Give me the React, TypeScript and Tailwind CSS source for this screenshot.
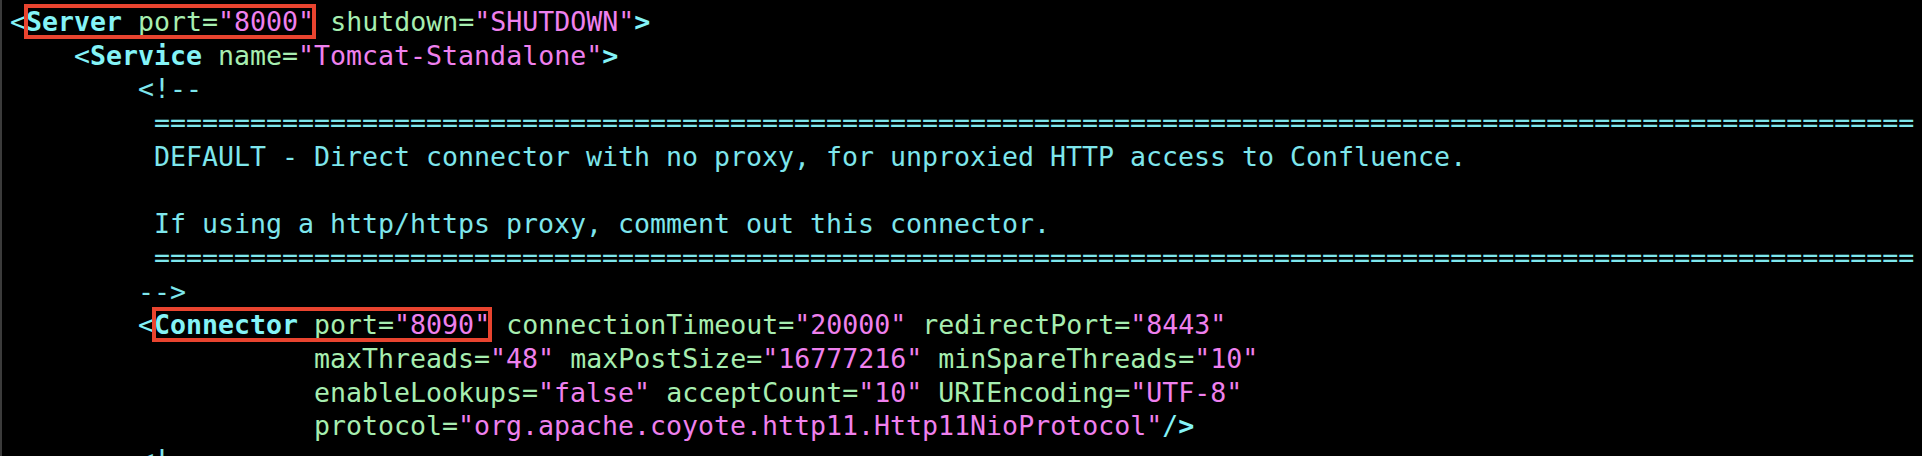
import React from "react";

const eq = "=".repeat(110);

function Tag({ children }: { children: React.ReactNode }) {
  return <span className="font-bold text-[#84f3f7]">{children}</span>;
}

function Punct({ children }: { children: React.ReactNode }) {
  return <span className="text-[#84f3f7]">{children}</span>;
}

function Attr({ name, value }: { name: string; value: string }) {
  return (
    <>
      <span className="text-[#a7eeb0]">{name}=</span>
      <span className="text-[#ef80ee]">"{value}"</span>
    </>
  );
}

function Boxed({ children }: { children: React.ReactNode }) {
  return <span className="outline-[4px] outline-solid outline-[#e9442f] outline-offset-[-2px]">{children}</span>;
}

export default function App() {
  return (
    <div className="h-[456px] w-full overflow-hidden bg-black border-l-2 border-[#3b3b3b]">
      <pre
        className="pl-2 pt-[5px] text-[26.58px] leading-[33.7px] whitespace-pre text-[#7ee6ec]"
        style={{ fontFamily: '"DejaVu Sans Mono", "Liberation Mono", monospace' }}
      >
        <div>
          <Punct>&lt;</Punct>
          <Boxed>
            <Tag>Server</Tag> <Attr name="port" value="8000" />
          </Boxed>{" "}
          <Attr name="shutdown" value="SHUTDOWN" />
          <Tag>&gt;</Tag>
        </div>
        <div>
          {"    "}
          <Punct>&lt;</Punct>
          <Tag>Service</Tag> <Attr name="name" value="Tomcat-Standalone" />
          <Tag>&gt;</Tag>
        </div>
        <div>{"        <!--"}</div>
        <div>{"         " + eq}</div>
        <div>{"         DEFAULT - Direct connector with no proxy, for unproxied HTTP access to Confluence."}</div>
        <div>{" "}</div>
        <div>{"         If using a http/https proxy, comment out this connector."}</div>
        <div>{"         " + eq}</div>
        <div>{"        -->"}</div>
        <div>
          {"        "}
          <Punct>&lt;</Punct>
          <Boxed>
            <Tag>Connector</Tag> <Attr name="port" value="8090" />
          </Boxed>{" "}
          <Attr name="connectionTimeout" value="20000" />{" "}
          <Attr name="redirectPort" value="8443" />
        </div>
        <div>
          {"                   "}
          <Attr name="maxThreads" value="48" /> <Attr name="maxPostSize" value="16777216" />{" "}
          <Attr name="minSpareThreads" value="10" />
        </div>
        <div>
          {"                   "}
          <Attr name="enableLookups" value="false" /> <Attr name="acceptCount" value="10" />{" "}
          <Attr name="URIEncoding" value="UTF-8" />
        </div>
        <div>
          {"                   "}
          <Attr name="protocol" value="org.apache.coyote.http11.Http11NioProtocol" />
          <Punct>/</Punct>
          <Tag>&gt;</Tag>
        </div>
        <div>{"        <!--"}</div>
      </pre>
    </div>
  );
}
